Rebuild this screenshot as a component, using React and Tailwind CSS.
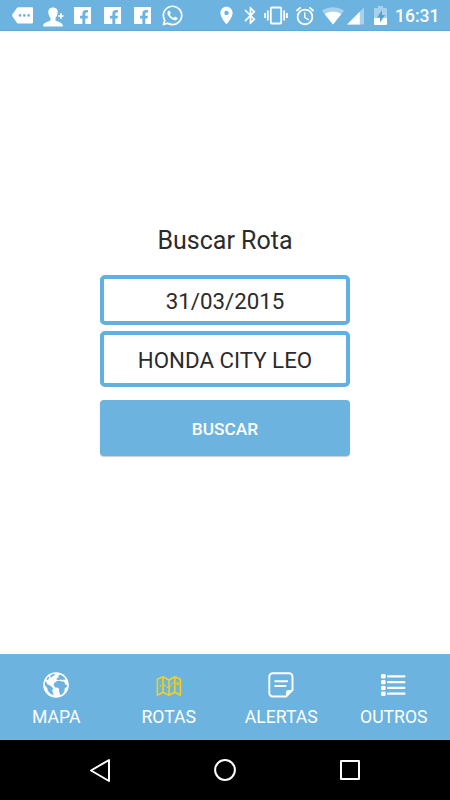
import { FaFacebookF, FaWhatsapp } from 'react-icons/fa';
import { MdAlarm, MdBluetooth, MdLocationOn } from 'react-icons/md';

const TABS = [
  { label: 'MAPA', icon: GlobeIcon },
  { label: 'ROTAS', icon: MapIcon },
  { label: 'ALERTAS', icon: NoteIcon },
  { label: 'OUTROS', icon: ListIcon },
];

function GlobeIcon() {
  return (
    <svg className="h-[26px] w-[26px]" viewBox="0 0 26 26">
      <circle cx="13" cy="13" r="12.8" fill="#fff" />
      <g fill="#6db3e0">
        {/* Africa */}
        <path d="M13 9.4l3-.9 2.4.9 2.600.200 1.400 2.800 1.800.8-.3 1.600-2.200 1.800-.3 3-2.200 3-1.800.3-1.200-2.600-.2-3.200-1-1.300-2.800-.2-1.500-2.200.4-2.200z" />
        {/* Americas */}
        <path d="M1.800 9.200l1.300.5 1.200 2.600 2.800 1.200 3 2.500-.8 2.200.4 2.200 1.200 2.600-2.800-.8-3-3-1-3.200-2-2.600z" />
        {/* Europe, Greenland */}
        <path d="M13.600 7.800l.2-1.600 1.800-.6-.2-1.500 1.400-1.600 2.600 1.300 2.400 2.300.8 1.800-2-.4-1.400.8-1.600-1-1.200.8zM7.400 3.400l2.600-1.300 2.200.2-1 1.300-1.800.6-.8 1.400-1.400-.5zM3.800 6.200l1.800-1.600.6 1.400-1.200 1.800-1.300.2z" />
      </g>
    </svg>
  );
}

function MapIcon() {
  return (
    <svg className="h-[22px] w-[26px]" viewBox="0 0 26 22" fill="none" stroke="#f2d021" strokeWidth="1.6" strokeLinejoin="round">
      <path d="M1.400 5.200L7 2.800l6 3.200 5.800-3.200 5.600 2.400v16L18.800 18.200 13 21.200 7 18.200l-5.600 3zM7 2.800v15.400M13 6v15.200M18.800 2.800v15.400" />
      <path strokeWidth="1.100" strokeDasharray="1.800 1.200" d="M4 13c1.400-4 3.400-3.400 5.500-1.200s4.500 2.200 5.500-.4 2.800-3.200 4.500-3.400" />
      <path strokeWidth="1.100" d="M20.500 8.300l2.200 2.200m0-2.200l-2.200 2.200" />
    </svg>
  );
}

function NoteIcon() {
  return (
    <svg className="h-[26px] w-[26px]" viewBox="0 0 26 26" fill="none" stroke="#fff" strokeWidth="1.9">
      <path d="M18 24.5H4.7a3.4 3.4 0 0 1-3.4-3.4V4.7a3.4 3.4 0 0 1 3.4-3.4h16.4a3.4 3.4 0 0 1 3.4 3.4V18z" strokeLinejoin="round" />
      <path fill="#fff" stroke="none" d="M18 25v-4.600a2.400 2.400 0 0 1 2.400-2.400H25z" />
      <path d="M7.200 9.200h12M7.200 14h10.300" strokeLinecap="round" />
    </svg>
  );
}

function ListIcon() {
  return (
    <svg className="h-[22px] w-[25px]" viewBox="0 0 25 22" fill="#fff">
      {[0, 5.8, 11.6, 17.4].map((y) => (
        <g key={y}>
          <rect x="0" y={y + 0.1} width="4.6" height="4.4" rx="1.2" />
          <rect x="6" y={y + 1.2} width="18.4" height="2.2" rx="0.9" />
        </g>
      ))}
    </svg>
  );
}

function Facebook() {
  return (
    <span className="flex h-[17px] w-[17px] items-end justify-end overflow-hidden bg-white pr-[2px]">
      <FaFacebookF className="h-[15px] w-[10px] shrink-0 translate-y-px text-[#6db3e0]" />
    </span>
  );
}

function StatusBar() {
  return (
    <header className="flex h-[31px] items-center border-b border-[#62a8d8] bg-[#6db3e0] pt-px text-white">
      <svg className="ml-[12px] h-[17px] w-[21px] shrink-0" viewBox="0 0 21 17">
        <path fill="#fff" d="M6.5.2H20q1 0 1 1v14.400q0 1-1 1H6.500q-1 0-1.600-.9L.3 9.200q-.5-.8 0-1.600L4.900 1q.6-.8 1.600-.8z" />
        <g fill="#6db3e0">
          <circle cx="8" cy="8.4" r="1.3" />
          <circle cx="12.3" cy="8.4" r="1.3" />
          <circle cx="16.6" cy="8.4" r="1.3" />
        </g>
      </svg>
      <svg className="ml-[10px] h-[20px] w-[21px] shrink-0 translate-y-px" viewBox="0 0 21 20">
        <path fill="#fff" d="M10 .5c3.300 0 4.900 2.200 4.700 5.200-.2 2.500-1.200 4-2.200 5.300v2.200c1.200 1.500 6 1.600 7 4.300.3.8.4 1.200.4 2H.1c0-.8.1-1.200.4-2 1-2.700 5.800-2.800 7-4.300V11C6.500 9.700 5.500 8.200 5.300 5.700 5.100 2.700 6.700.5 10 .5z" />
        <path stroke="#6db3e0" strokeWidth="3.400" d="M18 5.500v7M14.500 9h6.500" />
        <path stroke="#fff" strokeWidth="1.700" d="M17.900 6.300v5.400M15.200 9h5.400" />
      </svg>
      <span className="ml-[10px] flex gap-[13px]">
        <Facebook />
        <Facebook />
        <Facebook />
      </span>
      <FaWhatsapp className="ml-[10px] h-[23px] w-[23px] shrink-0" />
      <MdLocationOn className="ml-[32px] h-[21px] w-[21px] shrink-0" />
      <MdBluetooth className="ml-[3px] h-[21px] w-[21px] shrink-0" />
      <svg className="ml-[3px] h-[19px] w-[24px] shrink-0" viewBox="0 0 24 19" fill="none" stroke="#fff" strokeWidth="1.800">
        <rect x="6.800" y="1.500" width="10.400" height="16" rx="1" />
        <path d="M3.800 4.500v10M20.200 4.500v10M1.100 7v5M22.900 7v5" />
      </svg>
      <MdAlarm className="ml-[6px] h-[22px] w-[22px] shrink-0" />
      <svg className="ml-[6px] h-[18px] w-[22px] shrink-0" viewBox="0 0 22 18" fill="#fff">
        <path opacity="0.4" d="M0 3.800C6-1 16-1 22 3.800L11 17.500z" />
        <path d="M2.600 7c5-3.500 11.800-3.500 16.800 0L11 17.500z" />
      </svg>
      <svg className="ml-[3px] h-[18px] w-[17px] shrink-0" viewBox="0 0 18 18" fill="#fff">
        <path opacity="0.4" d="M0 18L18 0v18z" />
        <path d="M0 18L13.500 4.500V18z" />
      </svg>
      <svg className="ml-[10px] h-[19px] w-[13px] shrink-0" viewBox="0 0 13 19" fill="#fff">
        <path opacity="0.4" d="M1 2h3V0h5v2h3q1 0 1 1v9H0V3q0-1 1-1z" />
        <path d="M0 12h13v6q0 1-1 1H1q-1 0-1-1z" />
        <path fill="#5a9fce" d="M8 4L3 11.500h3V16.500l5-7.500H8z" />
      </svg>
      <span className="ml-[8px] translate-y-px text-[17.5px] leading-none font-medium">16:31</span>
    </header>
  );
}

export default function App() {
  return (
    <div className="flex h-[800px] w-[450px] flex-col overflow-hidden bg-white font-['Roboto',sans-serif]">
      <StatusBar />

      <main className="flex flex-1 flex-col items-center pt-[194px] text-[#2b2b2b]">
        <h1 className="text-[25px] leading-[32px]">Buscar Rota</h1>
        <div className="mt-[18px] flex h-[50px] w-[250px] items-center justify-center rounded-[5px] border-4 border-[#62afe0] pt-[3px] text-[22.3px]">
          31/03/2015
        </div>
        <div className="mt-[6px] flex h-[56px] w-[250px] items-center justify-center rounded-[5px] border-4 border-[#62afe0] pt-[4px] text-[22.3px]">
          HONDA CITY LEO
        </div>
        <button className="mt-[13px] h-[56px] w-[250px] rounded-[4px] bg-[#6db3e0] pt-[3px] text-[17.3px] font-medium text-white shadow-[0_1px_1px_rgba(0,0,0,0.2)]">
          BUSCAR
        </button>
      </main>

      <nav className="grid h-[86px] grid-cols-4 bg-[#6db3e0] text-white">
        {TABS.map(({ label, icon: Icon }) => (
          <div key={label} className="flex flex-col items-center pt-[18px]">
            <span className="flex h-[26px] items-center">
              <Icon />
            </span>
            <span className="mt-[8px] text-[17.6px] leading-[22px]">{label}</span>
          </div>
        ))}
      </nav>

      <footer className="flex h-[60px] items-center bg-black">
        <svg className="ml-[89px] h-[25px] w-[22px]" viewBox="0 0 22 25" fill="none" stroke="#fff" strokeWidth="2">
          <path strokeLinejoin="round" d="M20 2v21L2 12.500z" />
        </svg>
        <svg className="ml-[102px] h-[24px] w-[24px]" viewBox="0 0 24 24" fill="none" stroke="#fff" strokeWidth="2">
          <circle cx="12" cy="12" r="9.900" />
        </svg>
        <span className="ml-[103px] h-[20px] w-[20px] rounded-[1px] border-2 border-white" />
      </footer>
    </div>
  );
}
